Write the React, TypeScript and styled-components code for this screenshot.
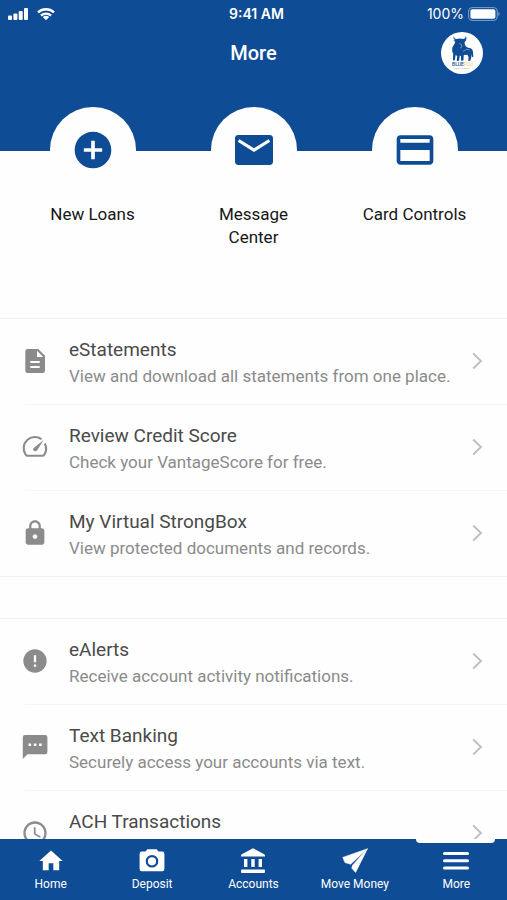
import React from "react";
import styled, { createGlobalStyle } from "styled-components";
import {
  MdAccessTime,
  MdAddCircle,
  MdCreditCard,
  MdError,
  MdHome,
  MdLock,
} from "react-icons/md";

const BLUE = "#0f4c96";

const GlobalStyle = createGlobalStyle`
  *, *::before, *::after { box-sizing: border-box; }
  body { margin: 0; background: #fff; font-family: Roboto, "Liberation Sans", sans-serif; }
`;

const Screen = styled.div`
  display: flex;
  flex-direction: column;
  height: 100vh;
  background: #fefefe;
`;

const Header = styled.header`
  flex: none;
  background: ${BLUE};
  color: #fff;
`;

const StatusBar = styled.div`
  display: grid;
  grid-template-columns: 1fr auto 1fr;
  align-items: center;
  height: 28px;
  padding: 0 7px 0 8px;
  font: 500 14px/28px Inter, sans-serif;
`;

const Clock = styled.span`
  padding-left: 5px;
  font-weight: 600;
`;

const StatusGroup = styled.div<{ $end?: boolean }>`
  display: flex;
  align-items: center;
  gap: ${(p) => (p.$end ? 4 : 8)}px;
  justify-content: ${(p) => (p.$end ? "flex-end" : "flex-start")};
  font-weight: 400;
`;

const TitleBar = styled.div`
  display: grid;
  grid-template-columns: 1fr auto 1fr;
  align-items: center;
  height: 50px;
  padding: 0 24px;
`;

const Title = styled.h1`
  grid-column: 2;
  margin: 0;
  font-size: 20px;
  font-weight: 500;
  line-height: 24px;
`;

const ProfileButton = styled.button`
  justify-self: end;
  width: 42px;
  height: 42px;
  padding: 0;
  border: 0;
  border-radius: 50%;
  background: #fff;
  overflow: hidden;
  cursor: pointer;
  svg { display: block; }
`;

const Content = styled.main`
  flex: 1;
  min-height: 0;
  overflow-y: auto;
  scrollbar-width: none;
`;

const QuickActions = styled.div`
  display: grid;
  grid-template-columns: repeat(3, 1fr);
  height: 240px;
  padding: 29px 12px 0;
  background: linear-gradient(${BLUE} 73px, transparent 73px);
`;

const QuickAction = styled.button`
  display: flex;
  flex-direction: column;
  align-items: center;
  justify-content: flex-start;
  gap: 10px;
  padding: 0 24px;
  border: 0;
  background: none;
  color: #161616;
  font: 400 17px/23px Roboto, sans-serif;
  cursor: pointer;
`;

const Circle = styled.span`
  display: flex;
  flex: none;
  align-items: center;
  justify-content: center;
  width: 86px;
  height: 86px;
  border-radius: 50%;
  background: #fefefe;
  color: ${BLUE};
`;

const Section = styled.ul`
  margin: 0 0 41px;
  padding: 0;
  list-style: none;
  border: solid #f2f2f2;
  border-width: 1px 0;
`;

const Item = styled.li`
  & + &::before {
    content: "";
    display: block;
    height: 1px;
    margin-left: 25px;
    background: #f5f5f5;
  }
`;

const RowLink = styled.a`
  display: grid;
  grid-template-columns: 28px 1fr 14px;
  column-gap: 20px;
  align-items: center;
  height: 85px;
  padding: 0 23px 2px 21px;
  color: #8b8b8b;
  text-decoration: none;
`;

const RowText = styled.span`
  display: flex;
  flex-direction: column;
  min-height: 56px;
  padding-top: 4px;
  white-space: nowrap;
  font-size: 17px;
  line-height: 26px;
`;

const RowTitle = styled.span`
  color: #4a4a4a;
  font-size: 19px;
`;

const TabBar = styled.nav`
  display: grid;
  flex: none;
  grid-template-columns: repeat(5, 1fr);
  height: 61px;
  background: ${BLUE};
`;

const Tab = styled.a<{ $active?: boolean }>`
  position: relative;
  display: flex;
  flex-direction: column;
  align-items: center;
  gap: 1px;
  padding-top: 8px;
  color: #fff;
  font-size: 12px;
  line-height: 16px;
  text-decoration: none;
  white-space: nowrap;
  &::before {
    content: "";
    display: ${(p) => (p.$active ? "block" : "none")};
    position: absolute;
    top: 0;
    left: 50%;
    width: 79px;
    height: 4px;
    margin-left: -40px;
    border-radius: 0 0 4px 4px;
    background: #fefefe;
  }
`;

const Signal = () => (
  <svg width="20" height="14" viewBox="0 0 20 14" fill="#fff" aria-hidden="true">
    <rect x="0" y="8.5" width="4" height="4.5" rx="1" />
    <rect x="5.4" y="6.5" width="4" height="6.5" rx="1" />
    <rect x="10.7" y="4" width="4" height="9" rx="1" />
    <rect x="16" y="1" width="4" height="12" rx="1" />
  </svg>
);

const Wifi = () => (
  <svg width="20" height="14" viewBox="0 0 20 14" fill="none" stroke="#fff" strokeWidth="2.4" aria-hidden="true">
    <path d="M2 5.4A11.8 11.8 0 0 1 18 5.4M5 8.6A7.4 7.4 0 0 1 15 8.6" />
    <path d="M6.8 10.1A4.8 4.8 0 0 1 13.2 10.1L10 13.3Z" fill="#fff" stroke="none" />
  </svg>
);

const Battery = () => (
  <svg width="32" height="14" viewBox="0 0 32 14" aria-hidden="true">
    <rect x=".6" y=".6" width="28.6" height="12.8" rx="3.4" fill="none" stroke="#7f9fc9" />
    <rect x="2.4" y="2.3" width="25" height="9.4" rx="1.8" fill="#fff" />
    <path d="M30.4 4.8c1.6.8 1.6 3.6 0 4.4z" fill="#7f9fc9" />
  </svg>
);

const BullLogo = () => (
  <svg width="42" height="42" viewBox="0 0 42 42" aria-hidden="true">
    <path
      fill={BLUE}
      d="M13 4.2C13 6 13.7 6.8 15.6 6.9L18.5 6.6 22 7C24 6.7 24.7 5.7 24.6 3.9C26.2 6 25.6 7.5 24.1 8.3L25.5 8.6 23.6 10 23.8 12.6 25.2 14.8C27 16.2 29.2 15.6 31 17.2C32.6 18.8 31.8 22 32.4 24.4L31.2 25.3 30.4 22.2 30.3 25.2 29.3 28.8 27.2 28.9 27.6 25.3 26.4 22.8 22.8 23.1 22.4 28.6 20 28.8 20 24.3 18.8 23.6 18 28.7 15.7 28.9 16.2 24.3 14.7 22.7 13.8 28.2 11.9 28.4 12.2 21.6C10.9 19.6 11 17.2 11.5 14.9L13.2 12.4 14.3 9.8 12.3 8.7 14.2 8.1C12.3 7.2 12 5.4 13 4.2Z"
    />
    <path d="M18.2 11.5l2.1 1 .7 2.2-2 1.5M22 19.5l3.5-2.2 3 .6" fill="none" stroke="#fff" strokeWidth=".4" />
    <g fontFamily="Roboto, sans-serif" fontWeight="500">
      <text x="11" y="33.5" fontSize="5" fill={BLUE}>BLUE</text>
      <text x="22.5" y="33.5" fontSize="5" fill="#f0cf78">FCU</text>
      <text x="12" y="36.5" fontSize="2.5" fill="#a7b3bd">CREDIT UNION</text>
    </g>
  </svg>
);

const EnvelopeIcon = () => (
  <svg width="38" height="30" viewBox="0 0 38 30" aria-hidden="true">
    <rect width="38" height="30" rx="3.4" fill="currentColor" />
    <path d="M3.6 5.5L19 15.2 34.4 5.5" fill="none" stroke="#fff" strokeWidth="3.2" />
  </svg>
);

const StatementIcon = () => (
  <svg width="28" height="28" viewBox="0 0 28 28" aria-hidden="true">
    <path fill="currentColor" fillRule="evenodd" d="M6.6 2H17.3L24 8.8V23.7A2.4 2.4 0 0 1 21.6 26H6.6A2.4 2.4 0 0 1 4.3 23.7V4.3A2.3 2.3 0 0 1 6.6 2ZM16 3.8V10H22.2ZM9.3 14V16H18.7V14ZM9.3 19V21H18.7V19Z" />
  </svg>
);

const GaugeIcon = () => (
  <svg width="28" height="28" viewBox="0 0 28 28" fill="none" stroke="currentColor" aria-hidden="true">
    <path d="M20.5 6.2A11.2 11.2 0 0 0 4.4 21.2Q5.2 22.8 6.8 22.8H21.2Q22.8 22.8 23.6 21.2A11 11 0 0 0 23.7 10.4" strokeWidth="2.1" />
    <path d="M22.7 6.9L16.2 17.2C14.2 19.6 10.8 17 12.7 14.9Z" fill="currentColor" stroke="none" />
  </svg>
);

const ChatIcon = () => (
  <svg width="28" height="28" viewBox="0 0 28 28" aria-hidden="true">
    <path fill="currentColor" d="M4 2H24.2A2.2 2.2 0 0 1 26.4 4.2V19A2.2 2.2 0 0 1 24.2 21.2H6.4L1.8 26V4.2A2.2 2.2 0 0 1 4 2Z" />
    <path fill="#fff" d="M7.5 10.5h2.6v2.6H7.5zM12.8 10.5h2.6v2.6h-2.6zM18.1 10.5h2.6v2.6h-2.6z" />
  </svg>
);

const Chevron = () => (
  <svg width="14" height="18" viewBox="0 0 14 18" fill="none" stroke="#bdbdbd" strokeWidth="1.8" aria-hidden="true">
    <path d="M3.2 1.5L11 9 3.2 16.5" />
  </svg>
);

const CameraIcon = () => (
  <svg width="28" height="28" viewBox="0 0 28 28" aria-hidden="true">
    <path fill="#fff" d="M9.4 2.2H18.6L20.5 4.5H24.2A2.2 2.2 0 0 1 26.4 6.7V22A2.2 2.2 0 0 1 24.2 24.2H3.8A2.2 2.2 0 0 1 1.6 22V6.7A2.2 2.2 0 0 1 3.8 4.5H7.5Z" />
    <circle cx="14" cy="14.3" r="5.2" fill="none" stroke={BLUE} strokeWidth="2.2" />
  </svg>
);

const BankIcon = () => (
  <svg width="28" height="28" viewBox="0 0 28 28" fill="#fff" aria-hidden="true">
    <path d="M14 1.2L25.2 7.2Q26 7.8 26 8.6V9.6H2V8.6Q2 7.8 2.8 7.2Z" />
    <path d="M5 12H8.4V20H5ZM12.3 12H15.7V20H12.3ZM19.6 12H23V20H19.6Z" />
    <rect x="2" y="22.6" width="24" height="3.4" rx="1" />
  </svg>
);

const PlaneIcon = () => (
  <svg width="28" height="28" viewBox="0 0 28 28" fill="#fff" stroke="#fff" strokeWidth=".6" strokeLinejoin="round" aria-hidden="true">
    <path d="M26.4 1.8L1.8 10.4 4 15.6 9.6 17.2Z" />
    <path d="M26.4 1.8L11.6 18.2 10.8 21.2 14.6 25.4Z" />
  </svg>
);

const MenuIcon = () => (
  <svg width="28" height="28" viewBox="0 0 28 28" stroke="#fff" strokeWidth="3" strokeLinecap="round" aria-hidden="true">
    <path d="M2.5 6.5H25.5M2.5 13.8H25.5M2.5 21H25.5" />
  </svg>
);

const actions = [
  { label: "New Loans", icon: <MdAddCircle size={44} /> },
  { label: "Message Center", icon: <EnvelopeIcon /> },
  { label: "Card Controls", icon: <MdCreditCard size={44} /> },
];

const sections = [
  [
    { title: "eStatements", text: "View and download all statements from one place.", icon: <StatementIcon /> },
    { title: "Review Credit Score", text: "Check your VantageScore for free.", icon: <GaugeIcon /> },
    { title: "My Virtual StrongBox", text: "View protected documents and records.", icon: <MdLock size={28} /> },
  ],
  [
    { title: "eAlerts", text: "Receive account activity notifications.", icon: <MdError size={28} /> },
    { title: "Text Banking", text: "Securely access your accounts via text.", icon: <ChatIcon /> },
    { title: "ACH Transactions", icon: <MdAccessTime size={28} /> },
  ],
];

const tabs = [
  { label: "Home", icon: <MdHome size={28} /> },
  { label: "Deposit", icon: <CameraIcon /> },
  { label: "Accounts", icon: <BankIcon /> },
  { label: "Move Money", icon: <PlaneIcon /> },
  { label: "More", icon: <MenuIcon />, active: true },
];

export default function App() {
  return (
    <>
      <GlobalStyle />
      <Screen>
        <Header>
          <StatusBar>
            <StatusGroup>
              <Signal />
              <Wifi />
            </StatusGroup>
            <Clock>9:41 AM</Clock>
            <StatusGroup $end>
              <span>100%</span>
              <Battery />
            </StatusGroup>
          </StatusBar>
          <TitleBar>
            <Title>More</Title>
            <ProfileButton aria-label="Profile">
              <BullLogo />
            </ProfileButton>
          </TitleBar>
        </Header>
        <Content>
          <QuickActions>
            {actions.map((a) => (
              <QuickAction key={a.label}>
                <Circle>{a.icon}</Circle>
                <span>{a.label}</span>
              </QuickAction>
            ))}
          </QuickActions>
          {sections.map((rows, i) => (
            <Section key={i}>
              {rows.map((r) => (
                <Item key={r.title}>
                  <RowLink href="#">
                    {r.icon}
                    <RowText>
                      <RowTitle>{r.title}</RowTitle>
                      {r.text && <span>{r.text}</span>}
                    </RowText>
                    <Chevron />
                  </RowLink>
                </Item>
              ))}
            </Section>
          ))}
        </Content>
        <TabBar>
          {tabs.map((t) => (
            <Tab key={t.label} href="#" $active={t.active} aria-current={t.active ? "page" : undefined}>
              {t.icon}
              {t.label}
            </Tab>
          ))}
        </TabBar>
      </Screen>
    </>
  );
}
